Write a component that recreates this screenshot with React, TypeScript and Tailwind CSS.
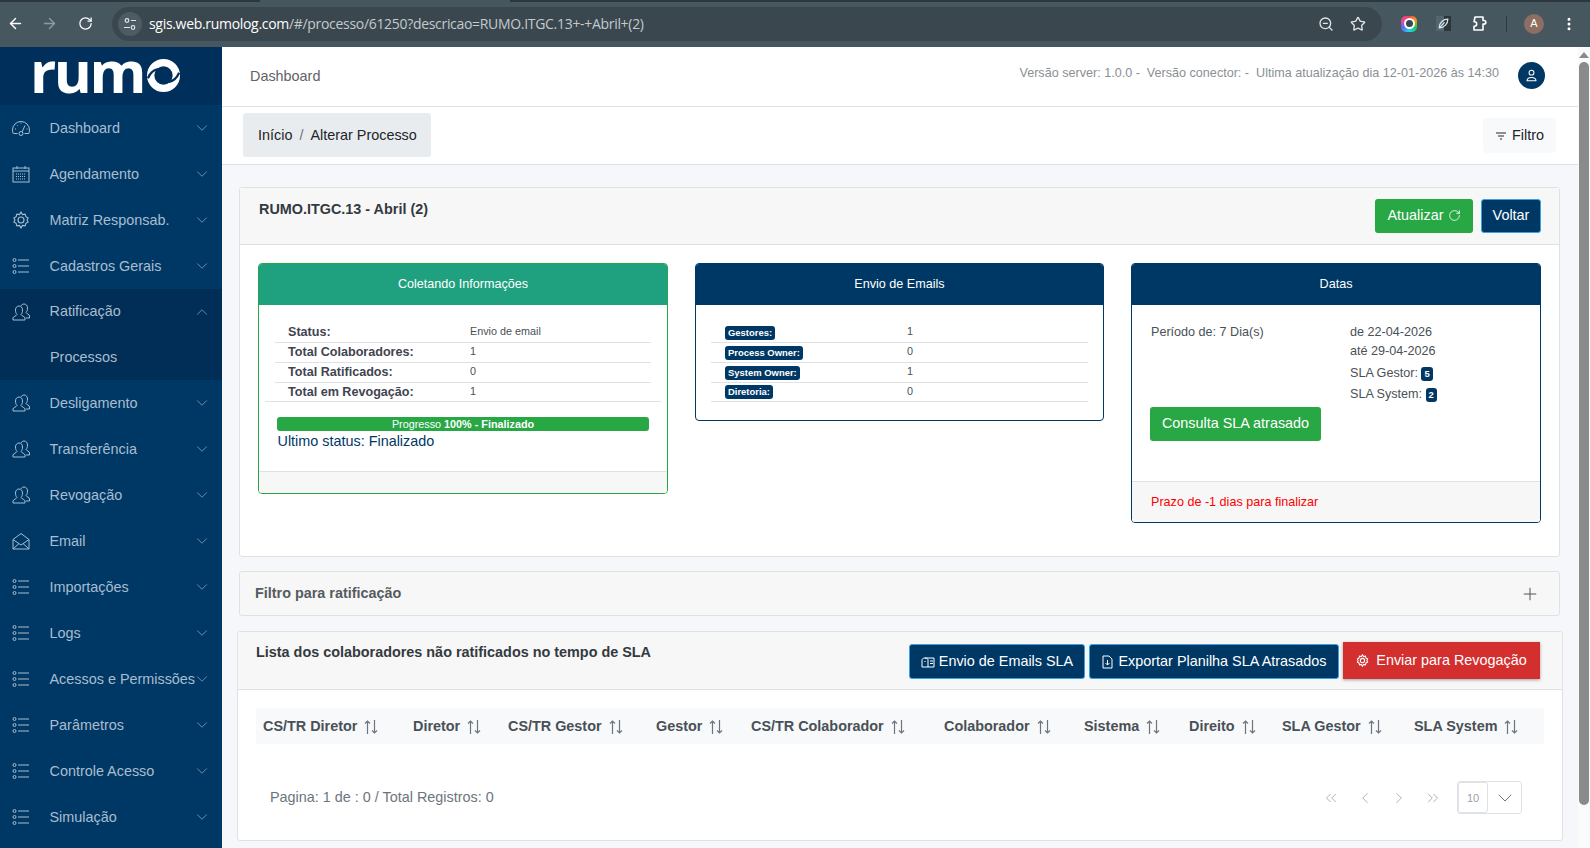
import { ArrowLeft, ArrowRight, RotateCw, Star, ZoomOut, Plus, ChevronDown, ChevronUp, ChevronLeft, ChevronRight, ChevronsLeft, ChevronsRight, MoreVertical } from "lucide-react";
import type { ReactNode } from "react";

const font = "font-['Liberation_Sans',Arial,sans-serif]";

const IconGauge = () => (
  <svg width="18" height="18" viewBox="0 0 18 18" fill="none" stroke="currentColor" strokeWidth="1">
    <path d="M1.5 14.5h4M12.5 14.5h4.3c.4-1 .7-2.2.7-3.5A8.5 8.5 0 0 0 .5 11c0 1.3.3 2.5.7 3.5" />
    <circle cx="9" cy="14.5" r="2" />
    <path d="M10 13l3-6.5M3 10h1M14.5 10h1M5 6l.7.7M9 3.5v1" />
  </svg>
);
const IconCalendar = () => (
  <svg width="18" height="18" viewBox="0 0 18 18" fill="none" stroke="currentColor" strokeWidth="1">
    <rect x="1" y="3" width="16" height="14" />
    <path d="M1 6h16M5 1v3M13 1v3" />
    <path d="M4 9h10M4 11.5h10M4 14h10" strokeDasharray="1 1" />
  </svg>
);
const gearPath = "M12 1.5l2 3.2 3.5-.6 1 3.4 3 1.8-1.4 2.7 1.4 2.7-3 1.8-1 3.4-3.5-.6-2 3.2-2-3.2-3.5.6-1-3.4-3-1.8L3.9 12 2.5 9.3l3-1.8 1-3.4 3.5.6z";
const IconGear = () => (
  <svg width="18" height="18" viewBox="0 0 24 24" fill="none" stroke="currentColor" strokeWidth="1.5">
    <path d={gearPath} />
    <circle cx="12" cy="12" r="4" />
  </svg>
);
const IconList = () => (
  <svg width="18" height="18" viewBox="0 0 18 18" fill="none" stroke="currentColor" strokeWidth="1">
    <circle cx="2.5" cy="3" r="1.5" />
    <circle cx="2.5" cy="9" r="1.5" />
    <circle cx="2.5" cy="15" r="1.5" />
    <path d="M6 3h11M6 9h11M6 15h11" />
  </svg>
);
const IconUsers = () => (
  <svg width="18" height="18" viewBox="0 0 18 18" fill="none" stroke="currentColor" strokeWidth="1">
    <path d="M1 17v-2c0-1.5 3.5-2 4-3.5C4 10.5 3.5 9 3.5 7c0-2.5 1.5-4 3.5-4s3.5 1.5 3.5 4c0 2-.5 3.5-1.5 4.5.5 1.5 4 2 4 3.5v2z" />
    <path d="M9 3c.6-1.2 1.7-2 3-2 2 0 3.5 1.5 3.5 4 0 2-.5 3.5-1.5 4.5.5 1.5 3.5 1.5 3.5 3.5v2H14" />
  </svg>
);
const IconMail = () => (
  <svg width="18" height="18" viewBox="0 0 18 18" fill="none" stroke="currentColor" strokeWidth="1">
    <path d="M1 7.5L9 1.5l8 6V17H1z" />
    <path d="M1 7.5l8 5.5 8-5.5M1 17l6-5.5M17 17l-6-5.5" />
  </svg>
);

const menu: { label: string; icon: ReactNode; open?: boolean }[] = [
  { label: "Dashboard", icon: <IconGauge /> },
  { label: "Agendamento", icon: <IconCalendar /> },
  { label: "Matriz Responsab.", icon: <IconGear /> },
  { label: "Cadastros Gerais", icon: <IconList /> },
  { label: "Ratificação", icon: <IconUsers />, open: true },
  { label: "Desligamento", icon: <IconUsers /> },
  { label: "Transferência", icon: <IconUsers /> },
  { label: "Revogação", icon: <IconUsers /> },
  { label: "Email", icon: <IconMail /> },
  { label: "Importações", icon: <IconList /> },
  { label: "Logs", icon: <IconList /> },
  { label: "Acessos e Permissões", icon: <IconList /> },
  { label: "Parâmetros", icon: <IconList /> },
  { label: "Controle Acesso", icon: <IconList /> },
  { label: "Simulação", icon: <IconList /> },
];

const columns = [
  { label: "CS/TR Diretor", w: "w-[157px]", pl: "pl-[7px]" },
  { label: "Diretor", w: "w-[95px]", pl: "" },
  { label: "CS/TR Gestor", w: "w-[148px]", pl: "" },
  { label: "Gestor", w: "w-[95px]", pl: "" },
  { label: "CS/TR Colaborador", w: "w-[193px]", pl: "" },
  { label: "Colaborador", w: "w-[140px]", pl: "" },
  { label: "Sistema", w: "w-[105px]", pl: "" },
  { label: "Direito", w: "w-[93px]", pl: "" },
  { label: "SLA Gestor", w: "w-[132px]", pl: "" },
  { label: "SLA System", w: "w-[130px]", pl: "" },
];

const emails = [
  ["Gestores:", "1"],
  ["Process Owner:", "0"],
  ["System Owner:", "1"],
  ["Diretoria:", "0"],
];

const SortIcon = () => (
  <svg width="16" height="16" viewBox="0 0 16 16" fill="none" stroke="#6c757d" strokeWidth="1.2" className="ml-[6px] shrink-0">
    <path d="M4.5 15V2M2 4.5L4.5 2 7 4.5" />
    <path d="M11.5 1v13M9 11.5l2.5 2.5 2.5-2.5" />
  </svg>
);

const Badge = ({ children }: { children: ReactNode }) => (
  <span className="inline-block rounded-[3px] bg-[#003865] px-[3px] text-[9.45px] leading-[14px] font-bold text-white">{children}</span>
);

const Row = ({ label, value }: { label: string; value: string }) => (
  <div className="flex h-[20px] items-center border-b border-[#dee2e6]">
    <div className="w-[195px] pl-[13px] text-[12.6px] font-bold text-[#3f4450]">{label}</div>
    <div className="mb-[2px] text-[10.8px] text-[#495057]">{value}</div>
  </div>
);

export default function App() {
  return (
    <div className={`flex h-[848px] w-[1590px] flex-col overflow-hidden bg-white ${font}`}>
      {/* barra do navegador */}
      <div className="relative flex h-[47px] shrink-0 items-center bg-[#47575f] pl-[6px] text-white">
        <div className="absolute left-0 top-0 h-[2px] w-[260px] bg-[#2c383e]" />
        <div className="absolute left-[510px] right-0 top-0 h-[2px] bg-[#2c383e]" />
        <ArrowLeft size={17} className="ml-[1px]" />
        <ArrowRight size={17} className="ml-[17px] text-[#8e9aa0]" />
        <RotateCw size={15} className="ml-[20px]" />
        <div className="ml-[19px] flex h-[34px] w-[1270px] items-center rounded-full bg-[#3a474e] pl-[6px] pr-[16px]">
          <div className="flex h-[24px] w-[24px] items-center justify-center rounded-full bg-[#4d5b62] text-[#dfe4e6]">
            <svg width="14" height="14" viewBox="0 0 14 14" fill="none" stroke="currentColor" strokeWidth="1.2">
              <circle cx="4" cy="3.5" r="1.8" />
              <circle cx="10" cy="10.5" r="1.8" />
              <path d="M8 3.5h5M1 10.5h6" />
            </svg>
          </div>
          <div className="ml-[7px] flex-1 font-['Open_Sans',sans-serif] text-[14px] tracking-[-0.31px] text-[#c3cace]">
            <span className="text-white">sgis.web.rumolog.com</span>/#/processo/61250?descricao=RUMO.ITGC.13+-+Abril+(2)
          </div>
          <ZoomOut size={16} className="text-[#dfe4e6]" />
          <Star size={16} className="ml-[16px] text-[#dfe4e6]" />
        </div>
        <div className="ml-[19px] flex h-[16px] w-[16px] items-center justify-center rounded-[5px] bg-[conic-gradient(#f43f5e,#f59e0b,#22c55e,#22d3ee,#6366f1,#ec4899,#f43f5e)]">
          <div className="h-[11px] w-[11px] rounded-full border-2 border-white bg-[#37474f]" />
        </div>
        <div className="ml-[19px] flex h-[15px] w-[15px] items-center justify-center bg-[linear-gradient(90deg,#52666f_50%,#2a363c_50%)] text-[#dfe6e9]">
          <svg width="13" height="13" viewBox="0 0 12 12" fill="none" stroke="currentColor" strokeWidth="1.1">
            <path d="M2 10C2 5 6 2 10 2c0 4-3 8-8 8zM2 10l5-5" />
          </svg>
        </div>
        <svg width="17" height="17" viewBox="0 0 17 17" fill="none" stroke="currentColor" strokeWidth="1.6" className="ml-[20px]">
          <path d="M4 2h8v3.5h1a1.8 1.8 0 0 1 0 3.6h-1V15H3v-3.8h.5a2.2 2.2 0 0 0 0-4.4H3z" strokeLinejoin="round" />
        </svg>
        <div className="ml-[18px] h-[16px] w-[1px] bg-[#2f3a40]" />
        <div className="ml-[17px] flex h-[20px] w-[20px] items-center justify-center rounded-full bg-[#8d6e63] text-[11px]">A</div>
        <MoreVertical size={16} strokeWidth={2.5} className="ml-[17px]" />
      </div>

      <div className="flex min-h-0 flex-1">
        {/* menu lateral */}
        <aside className="w-[222px] shrink-0 bg-[#003865] text-[14.4px] text-[#a9bdd0]">
          <div className="flex h-[58px] items-start bg-[#002f5b] pl-[30px]">
            <span className="mt-[-12px] font-['Open_Sans',sans-serif] text-[58px] leading-[72px] font-bold tracking-[-2.5px] text-white">rum</span>
            <svg width="33" height="33" viewBox="0 0 36 36" fill="none" className="mt-[12px] ml-[3px]">
              <circle cx="18" cy="18" r="14" stroke="white" strokeWidth="8" />
              <path d="M1 21C6 9 18 8 24 17M35 15C30 27 18 28 12 19" stroke="#002f5b" strokeWidth="2.5" />
            </svg>
          </div>
          {menu.map((item) => (
            <div key={item.label} className={item.open ? "bg-[#002e56]" : ""}>
              <div className={`flex items-center pl-[12px] pr-[11px] ${item.open ? "h-[45px]" : "h-[46px]"}`}>
                <span className="flex w-[18px] shrink-0 justify-center">{item.icon}</span>
                <span className={`ml-[19.5px] flex-1 whitespace-nowrap ${item.open ? "" : "pt-[2px]"}`}>{item.label}</span>
                {item.open ? (
                  <ChevronUp size={18} strokeWidth={1.2} className="ml-[-4px] shrink-0 opacity-70" />
                ) : (
                  <ChevronDown size={18} strokeWidth={1.2} className="ml-[-4px] shrink-0 opacity-70" />
                )}
              </div>
              {item.open && <div className="flex h-[46px] items-center pl-[50px] pt-[2px]">Processos</div>}
            </div>
          ))}
        </aside>

        {/* conteudo */}
        <main className="min-w-0 flex-1 bg-[#f6f7fb] text-[#495057]">
          <header className="flex h-[60px] items-center justify-between border-b border-[#dee2e6] bg-white pl-[28px] pr-[33px]">
            <span className="text-[14.4px] text-[#5f6368]">Dashboard</span>
            <div className="flex items-center">
              <span className="mb-[6px] text-[12.6px] whitespace-pre text-[#8a8f94]">Versão server: 1.0.0 -  Versão conector: -  Ultima atualização dia 12-01-2026 às 14:30</span>
              <div className="mb-[2px] ml-[19px] flex h-[27px] w-[27px] items-center justify-center rounded-full bg-[#003865] text-white">
                <svg width="13" height="13" viewBox="0 0 16 16" fill="none" stroke="currentColor" strokeWidth="1.3">
                  <circle cx="8" cy="4.5" r="3" />
                  <path d="M2.5 14.5c0-3 2-4 5.5-4s5.5 1 5.5 4z" />
                </svg>
              </div>
            </div>
          </header>

          <div className="flex h-[58px] items-start justify-between border-b border-[#dee2e6] bg-white pl-[21px] pr-[22px]">
            <div className="mt-[6px] flex h-[44px] w-[188px] items-center rounded-[3px] bg-[#e9ecef] pl-[15px] pt-[2px] text-[14.4px] text-[#212529]">
              Início<span className="mx-[7px] text-[#6c757d]">/</span>Alterar Processo
            </div>
            <div className="mt-[11px] flex h-[35px] w-[73px] items-center justify-center rounded-[4px] bg-[#f8f9fa] text-[14.4px] text-[#212529]">
              <svg width="12" height="12" viewBox="0 0 12 12" stroke="currentColor" strokeWidth="1.2" className="mr-[5px]">
                <path d="M1 3h10M3 6h6M5 9h2" />
              </svg>
              Filtro
            </div>
          </div>

          <section className="mt-[22px] ml-[17px] mr-[18px] rounded-[3px] border border-[#dfe1e3] bg-white">
            <div className="flex h-[57px] justify-between border-b border-[#dfe1e3] bg-[#f7f7f7] pl-[19px] pr-[18px]">
              <div className="pt-[11px] text-[14.4px] font-bold text-[#343a40]">RUMO.ITGC.13 - Abril (2)</div>
              <div className="flex pt-[11px]">
                <button className="flex h-[34px] w-[98px] items-center justify-center rounded-[3px] bg-[#28a745] pb-[1px] text-[14.4px] text-white">
                  Atualizar<RotateCw size={13} strokeWidth={1.5} className="ml-[4px]" />
                </button>
                <button className="ml-[8px] h-[34px] w-[60px] rounded-[3px] border border-[#3aa0e8] bg-[#003865] pb-[1px] text-[14.4px] text-white">Voltar</button>
              </div>
            </div>
            <div className="grid h-[311px] grid-cols-[410px_409px_410px] items-start gap-[27px] pl-[18px] pt-[18px]">
              <div className="overflow-hidden rounded-[4px] border border-[#28a745] bg-white">
                <div className="flex h-[41px] items-center justify-center bg-[#1fa17f] text-[12.6px] text-white">Coletando Informações</div>
                <div className="h-[166px] px-[6px] pt-[18px]">
                  <div className="mx-[10px]">
                    <Row label="Status:" value="Envio de email" />
                    <Row label="Total Colaboradores:" value="1" />
                    <Row label="Total Ratificados:" value="0" />
                  </div>
                  <div className="flex h-[19px] items-center border-b border-[#dee2e6]">
                    <div className="w-[205px] pl-[23px] text-[12.6px] font-bold text-[#3f4450]">Total em Revogação:</div>
                    <div className="mb-[2px] text-[10.8px] text-[#495057]">1</div>
                  </div>
                  <div className="mx-[12px] mt-[15px] h-[14px] rounded-[3px] bg-[#28a745] text-center text-[10.8px] leading-[14px] text-white">
                    Progresso <b>100% - Finalizado</b>
                  </div>
                  <div className="mx-[12.5px] text-[14.4px] leading-[20px] text-[#003865]">Ultimo status: Finalizado</div>
                </div>
                <div className="h-[22px] border-t border-[#dee2e6] bg-[#f7f7f7]" />
              </div>

              <div className="overflow-hidden rounded-[4px] border border-[#003865] bg-white">
                <div className="flex h-[41px] items-center justify-center bg-[#003865] text-[12.6px] text-white">Envio de Emails</div>
                <div className="h-[115px] px-[15px] pt-[18px]">
                  {emails.map(([label, value]) => (
                    <div key={label} className="flex h-[20px] items-center border-b border-[#dee2e6] last:h-[19px]">
                      <div className="mb-[2px] w-[196px] pl-[14px] leading-[14px]"><Badge>{label}</Badge></div>
                      <div className="mb-[2px] text-[10.8px] text-[#495057]">{value}</div>
                    </div>
                  ))}
                </div>
              </div>

              <div className="overflow-hidden rounded-[4px] border border-[#003865] bg-white">
                <div className="flex h-[41px] items-center justify-center bg-[#003865] text-[12.6px] text-white">Datas</div>
                <div className="relative h-[176px] pl-[19px] pt-[18px] text-[12.6px] text-[#495057]">
                  <div className="flex">
                    <div className="w-[199px] leading-[19px]">Período de: 7 Dia(s)</div>
                    <div className="leading-[19px]">
                      <div>de 22-04-2026</div>
                      <div>até 29-04-2026</div>
                      <div className="mt-[3px] h-[21px]">SLA Gestor: <Badge>5</Badge></div>
                      <div className="h-[21px]">SLA System: <Badge>2</Badge></div>
                    </div>
                  </div>
                  <button className="absolute left-[18px] top-[102px] h-[34px] w-[171px] rounded-[3px] bg-[#28a745] text-[14.4px] text-white">Consulta SLA atrasado</button>
                </div>
                <div className="flex h-[41px] items-center border-t border-[#dee2e6] bg-[#f7f7f7] pl-[19px] text-[12.6px] text-[#ff0000]">Prazo de -1 dias para finalizar</div>
              </div>
            </div>
          </section>

          <section className="mt-[14px] ml-[17px] mr-[18px] flex h-[45px] items-center justify-between rounded-[3px] border border-[#dfe1e3] bg-[#f7f7f7] pl-[15px] pr-[19px]">
            <span className="text-[14.4px] font-bold text-[#555b62]">Filtro para ratificação</span>
            <Plus size={20} strokeWidth={1.2} className="text-[#555]" />
          </section>

          <section className="mt-[15px] mx-[15px] h-[210px] rounded-[3px] border border-[#dfe1e3] bg-white">
            <div className="flex h-[58px] justify-between border-b border-[#dfe1e3] bg-[#f7f7f7] pl-[18px] pr-[22px]">
              <div className="pt-[10px] text-[14.4px] font-bold text-[#343a40]">Lista dos colaboradores não ratificados no tempo de SLA</div>
              <div className="flex items-start pt-[10px]">
                <button className="mt-[2px] flex h-[35px] w-[176px] items-center justify-center rounded-[3px] border border-[#3aa0e8] bg-[#003865] text-[14.4px] text-white">
                  <svg width="14" height="12" viewBox="0 0 14 12" fill="none" stroke="currentColor" strokeWidth="1" className="mr-[4px]">
                    <path d="M1 4v7h12V2H4C2 2 1 3 1 4zM4 2c2 0 3 1 3 2v7M4 5v1M9 5h3M9 7.5h3" />
                  </svg>
                  Envio de Emails SLA
                </button>
                <button className="ml-[4px] mt-[2px] flex h-[35px] w-[250px] items-center justify-center rounded-[3px] border border-[#3aa0e8] bg-[#003865] text-[14.4px] text-white">
                  <svg width="11" height="14" viewBox="0 0 11 14" fill="none" stroke="currentColor" strokeWidth="1" className="mr-[6px]">
                    <path d="M1 1h6l3 3v9H1zM5.5 5v5M3.5 8l2 2 2-2" />
                  </svg>
                  Exportar Planilha SLA Atrasados
                </button>
                <button className="ml-[4px] flex h-[37px] w-[197px] items-center justify-center bg-[#d32f2f] text-[14.4px] text-white shadow-[0_1px_3px_rgba(0,0,0,0.35)]">
                  <svg width="13" height="13" viewBox="0 0 24 24" fill="none" stroke="currentColor" strokeWidth="2" className="mr-[7px]">
                    <path d={gearPath} />
                    <circle cx="12" cy="12" r="4" />
                  </svg>
                  Enviar para Revogação
                </button>
              </div>
            </div>
            <div className="mx-[18px] mt-[18px] flex h-[36px] items-center bg-[#f8f9fa] pt-[2px] text-[14.4px] font-bold text-[#495057]">
              {columns.map((col) => (
                <div key={col.label} className={`flex shrink-0 items-center whitespace-nowrap ${col.w} ${col.pl}`}>
                  {col.label}
                  <SortIcon />
                </div>
              ))}
            </div>
            <div className="mt-[37px] flex h-[33px] items-center justify-between pl-[32px] pr-[40px]">
              <span className="text-[14.4px] text-[#6c757d]">Pagina: 1 de : 0 / Total Registros: 0</span>
              <div className="flex items-center text-[#9aa1a8]">
                <ChevronsLeft size={18} strokeWidth={1.1} />
                <ChevronLeft size={18} strokeWidth={1.1} className="ml-[16.5px]" />
                <ChevronRight size={18} strokeWidth={1.1} className="ml-[15.5px]" />
                <ChevronsRight size={18} strokeWidth={1.1} className="ml-[16.5px]" />
                <div className="ml-[15px] flex h-[33px] w-[65px] items-stretch rounded-[3px] border border-[#dee2e6]">
                  <div className="flex w-[30px] items-center justify-center rounded-[3px] border border-[#dee2e6] pt-[2px] text-[11px] text-[#9aa1a8]">10</div>
                  <div className="flex flex-1 items-center justify-center">
                    <ChevronDown size={24} strokeWidth={1} className="text-[#6c757d]" />
                  </div>
                </div>
              </div>
            </div>
          </section>
        </main>

        {/* barra de rolagem */}
        <div className="flex w-[12px] shrink-0 flex-col items-center bg-[#fafafa]">
          <div className="mt-[5px] h-0 w-0 border-x-[5px] border-b-[6px] border-x-transparent border-b-[#8a8a8a]" />
          <div className="mt-[4px] h-[743px] w-[10px] rounded-full bg-[#8a8a8a]" />
        </div>
      </div>
    </div>
  );
}
